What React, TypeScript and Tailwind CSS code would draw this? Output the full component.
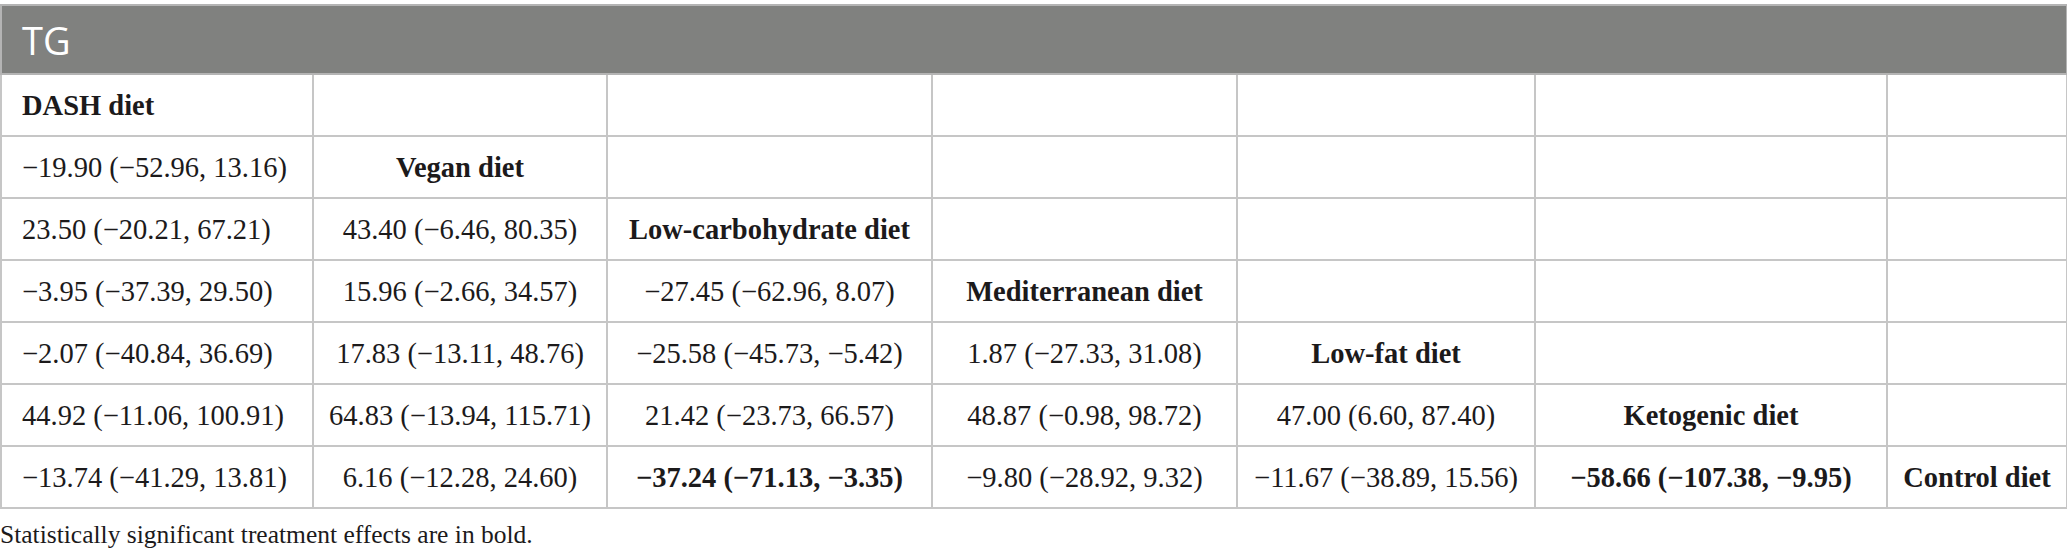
import React from "react";

type Cell = { t: string; b?: boolean };

const rows: Cell[][] = [
  [{ t: "DASH diet", b: true }, { t: "" }, { t: "" }, { t: "" }, { t: "" }, { t: "" }, { t: "" }],
  [{ t: "−19.90 (−52.96, 13.16)" }, { t: "Vegan diet", b: true }, { t: "" }, { t: "" }, { t: "" }, { t: "" }, { t: "" }],
  [{ t: "23.50 (−20.21, 67.21)" }, { t: "43.40 (−6.46, 80.35)" }, { t: "Low-carbohydrate diet", b: true }, { t: "" }, { t: "" }, { t: "" }, { t: "" }],
  [{ t: "−3.95 (−37.39, 29.50)" }, { t: "15.96 (−2.66, 34.57)" }, { t: "−27.45 (−62.96, 8.07)" }, { t: "Mediterranean diet", b: true }, { t: "" }, { t: "" }, { t: "" }],
  [{ t: "−2.07 (−40.84, 36.69)" }, { t: "17.83 (−13.11, 48.76)" }, { t: "−25.58 (−45.73, −5.42)" }, { t: "1.87 (−27.33, 31.08)" }, { t: "Low-fat diet", b: true }, { t: "" }, { t: "" }],
  [{ t: "44.92 (−11.06, 100.91)" }, { t: "64.83 (−13.94, 115.71)" }, { t: "21.42 (−23.73, 66.57)" }, { t: "48.87 (−0.98, 98.72)" }, { t: "47.00 (6.60, 87.40)" }, { t: "Ketogenic diet", b: true }, { t: "" }],
  [{ t: "−13.74 (−41.29, 13.81)" }, { t: "6.16 (−12.28, 24.60)" }, { t: "−37.24 (−71.13, −3.35)", b: true }, { t: "−9.80 (−28.92, 9.32)" }, { t: "−11.67 (−38.89, 15.56)" }, { t: "−58.66 (−107.38, −9.95)", b: true }, { t: "Control diet", b: true }],
];

export default function App() {
  return (
    <div className="w-[2067px] h-[559px] bg-white pt-[4px] font-['Liberation_Serif',serif] text-[#1c1a1b]">
      <table className="table-fixed border-collapse w-[2066px]">
        <colgroup>
          <col className="w-[312px]" />
          <col className="w-[294px]" />
          <col className="w-[325px]" />
          <col className="w-[305px]" />
          <col className="w-[298px]" />
          <col className="w-[352px]" />
          <col className="w-[180px]" />
        </colgroup>
        <thead>
          <tr>
            <th
              colSpan={7}
              className="h-[69px] bg-[#80817f] border-2 border-[#b4b4b4] text-left pl-[20px] font-['Open_Sans',sans-serif] font-normal text-white text-[38px] leading-none"
            >
              TG
            </th>
          </tr>
        </thead>
        <tbody>
          {rows.map((r, i) => (
            <tr key={i}>
              {r.map((c, j) => (
                <td
                  key={j}
                  className={
                    "h-[62px] border-2 border-[#c6c6c6] text-[28.5px] leading-none whitespace-nowrap pt-[3px] " +
                    (j === 0 ? "text-left pl-[20px] " : "text-center ") +
                    (c.b ? "font-bold" : "font-normal")
                  }
                >
                  {c.t}
                </td>
              ))}
            </tr>
          ))}
        </tbody>
      </table>
      <div className="mt-[13px] text-[25.5px] leading-none">
        Statistically significant treatment effects are in bold.
      </div>
    </div>
  );
}
